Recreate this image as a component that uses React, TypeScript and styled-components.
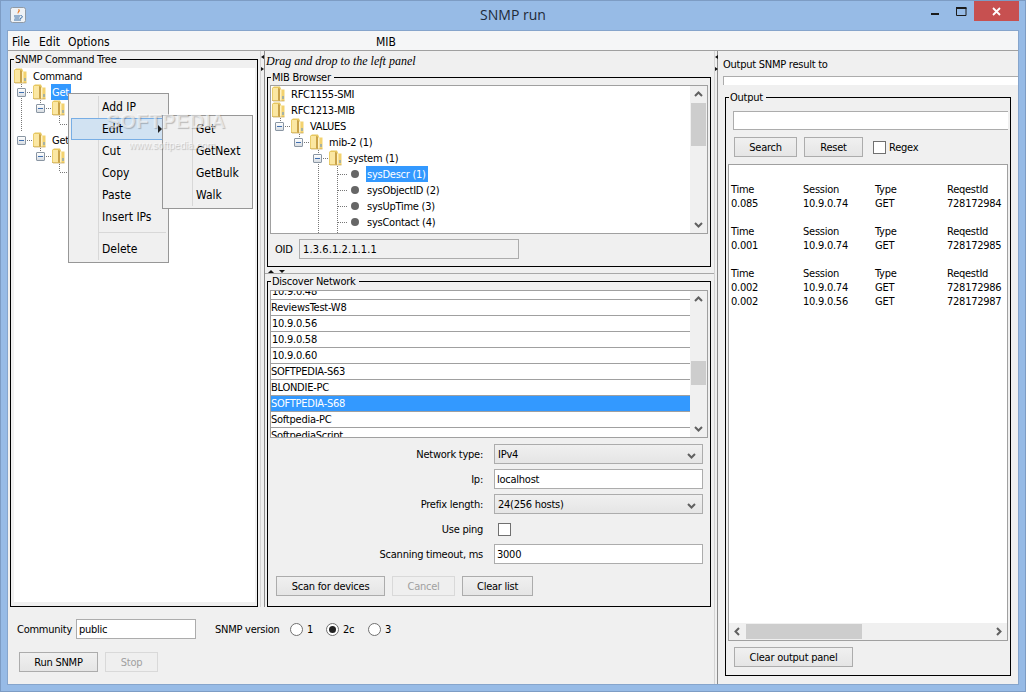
import { createGlobalStyle, styled } from 'styled-components'

const UI_FONT = `'DejaVu Sans Condensed', 'DejaVu Sans', 'Liberation Sans', sans-serif`

const GlobalStyle = createGlobalStyle`
  html, body {
    margin: 0;
    padding: 0;
    background: #97bbe6;
  }
  * {
    box-sizing: border-box;
  }
`

const Frame = styled.div`
  position: relative;
  width: 1026px;
  height: 692px;
  overflow: hidden;
  background: #97bbe6;
  border: 1px solid #7d9cc4;
  display: flex;
  flex-direction: column;
  font: 11px/14px ${UI_FONT};
  font-stretch: condensed;
  letter-spacing: -0.25px;
  color: #000;
`

const TitleBar = styled.div`
  position: relative;
  height: 30px;
  flex: none;
  display: flex;
  align-items: flex-start;
  padding-left: 9px;
`

const AppIcon = styled.svg`
  margin-top: 6px;
  width: 16px;
  height: 16px;
`

const TitleText = styled.div`
  flex: 1;
  text-align: center;
  font: 14px/28px 'Open Sans', sans-serif;
  font-stretch: normal;
  letter-spacing: 0;
  color: #1e2a38;
  padding-left: 78px;
`

const WindowButtons = styled.div`
  display: flex;
  align-items: flex-start;
  margin-right: 6px;
`

const WinButton = styled.div`
  width: 26px;
  height: 20px;
  display: flex;
  align-items: center;
  justify-content: center;
`

const CloseButton = styled.div`
  width: 45px;
  height: 20px;
  background: #c75050;
  display: flex;
  align-items: center;
  justify-content: center;
`

const Client = styled.div`
  margin: 0 7px 7px 7px;
  height: 653px;
  background: #f0f0f0;
  display: flex;
  flex-direction: column;
  outline: 1px solid #86a5cc;
`

const MenuBar = styled.div`
  height: 20px;
  flex: none;
  background: #f5f6f7;
  border-bottom: 1px solid #a0a0a0;
  display: flex;
  align-items: center;
  padding: 2px 0 0 4px;
  font-size: 12px;
  letter-spacing: 0;
`

const MenuItem = styled.span<{ $w: number }>`
  width: ${p => p.$w}px;
`

const Workspace = styled.div`
  flex: 1;
  display: flex;
  min-height: 0;
`

const LeftBlock = styled.div`
  width: 706px;
  flex: none;
  display: flex;
  flex-direction: column;
`

const Panels = styled.div`
  height: 556px;
  flex: none;
  display: flex;
`

const LeftPanel = styled.div`
  width: 252px;
  flex: none;
  padding: 1px 0 0 2px;
`

const VSplit = styled.div`
  width: 5px;
  flex: none;
  border-right: 1px solid #8c8c8c;
  border-left: 1px solid #d4d4d4;
  padding-top: 4px;
`

const SplitArrows = styled.svg`
  display: block;
  width: 4px;
  height: 16px;
`

const MiddlePanel = styled.div`
  width: 449px;
  flex: none;
  padding-left: 2px;
`

const Note = styled.div`
  height: 19px;
  font: italic 12px/20px 'Liberation Serif', serif;
  font-stretch: normal;
  letter-spacing: 0;
  margin-left: -1px;
`

const Group = styled.fieldset<{ $w: number; $h: number; $pt: number }>`
  width: ${p => p.$w}px;
  height: ${p => p.$h}px;
  margin: 0;
  border: 1px solid #000;
  padding: ${p => p.$pt}px 2px 2px 2px;
  min-width: 0;
`

const GroupTitle = styled.legend`
  padding: 0 3px 0 1px;
  margin-left: 1px;
  height: 14px;
  line-height: 15px;
`

const HSplit = styled.div`
  height: 7px;
  margin-left: -2px;
  border-bottom: 1px solid #a8a8a8;
  padding: 3px 0 0 3px;
`

const HArrows = styled.svg`
  display: block;
  width: 18px;
  height: 3px;
`

const ListFrame = styled.div<{ $h: number }>`
  height: ${p => p.$h}px;
  border: 1px solid #a0a0a0;
  background: #fff;
  display: flex;
  overflow: hidden;
`

const Tree = styled.div<{ $pl?: number }>`
  position: relative;
  flex: 1;
  min-width: 0;
  background: #fff;
  padding-left: ${p => p.$pl ?? 0}px;
  overflow: hidden;
`

const CommandTree = styled(Tree)`
  height: 534px;
  margin-left: 1px;
`

const Guides = styled.svg`
  position: absolute;
  left: 0;
  top: 0;
  width: 100%;
  height: 100%;
  shape-rendering: crispEdges;
`

const TreeRow = styled.div<{ $indent: number }>`
  position: relative;
  height: 16px;
  display: flex;
  align-items: center;
  padding-left: ${p => p.$indent}px;
  white-space: nowrap;
`

const Expander = styled.span`
  width: 9px;
  height: 9px;
  margin-right: 7px;
  flex: none;
  border: 1px solid #8a96a3;
  border-radius: 1px;
  background: linear-gradient(#fff, #d8dde2);
  display: flex;
  align-items: center;
  justify-content: center;

  &::after {
    content: '';
    width: 5px;
    height: 1px;
    background: #3f6fb0;
  }
`

const Leaf = styled.span`
  width: 13px;
  height: 16px;
  flex: none;
  display: flex;
  align-items: center;
  justify-content: center;

  &::after {
    content: '';
    width: 8px;
    height: 8px;
    border-radius: 50%;
    background: #666;
  }
`

const FolderIcon = styled.svg`
  width: 13px;
  height: 16px;
  flex: none;
`

const NodeLabel = styled.span<{ $selected?: boolean }>`
  margin-left: 5px;
  padding: 0 2px 0 1px;
  line-height: 18px;
  height: 16px;
  background: ${p => (p.$selected ? '#3399ff' : 'transparent')};
  color: ${p => (p.$selected ? '#fff' : '#000')};
`

const ScrollV = styled.div`
  width: 17px;
  flex: none;
  background: #f0f0f0;
  display: flex;
  flex-direction: column;
  align-items: center;
`

const ArrowBox = styled.div`
  width: 17px;
  height: 17px;
  flex: none;
  display: flex;
  align-items: center;
  justify-content: center;
`

const TrackV = styled.div`
  flex: 1;
  width: 100%;
  padding: 0 1px;
`

const ThumbV = styled.div<{ $top: number; $h: number }>`
  margin-top: ${p => p.$top}px;
  height: ${p => p.$h}px;
  background: #cdcdcd;
`

const Caption = styled.span`
  padding-top: 2px;
`

const OidRow = styled.div`
  display: flex;
  align-items: center;
  margin-top: 5px;
  padding-left: 5px;
`

const OidLabel = styled(Caption)`
  width: 24px;
  flex: none;
`

const OidValue = styled.div`
  width: 220px;
  height: 20px;
  padding-left: 3px;
  border: 1px solid #acacac;
  background: #f0f0f0;
  line-height: 20px;
  letter-spacing: 0.1px;
`

const Hosts = styled.div`
  flex: 1;
  min-width: 0;
  overflow: hidden;
`

const HostRows = styled.div`
  margin-top: -7px;
`

const HostRow = styled.div<{ $selected?: boolean; $ip?: boolean }>`
  height: 16px;
  line-height: 15px;
  padding-left: ${p => (p.$ip ? 1 : 0)}px;
  border-bottom: 1px solid #a0a0a0;
  background: ${p => (p.$selected ? '#3399ff' : '#fff')};
  color: ${p => (p.$selected ? '#fff' : '#000')};
`

const FormGrid = styled.div`
  display: grid;
  grid-template-columns: 212px 209px;
  column-gap: 11px;
  row-gap: 5px;
  grid-auto-rows: 20px;
  align-items: center;
  margin: 6px 0 0 1px;
`

const FormLabel = styled.label`
  text-align: right;
  padding-top: 2px;
`

const Combo = styled.div`
  height: 20px;
  border: 1px solid #acacac;
  background: linear-gradient(#f0f0f0, #e5e5e5);
  display: flex;
  align-items: center;
  justify-content: space-between;
  padding: 2px 6px 0 3px;
`

const TextInput = styled.input<{ $w?: number }>`
  width: ${p => (p.$w ? `${p.$w}px` : '100%')};
  height: 20px;
  border: 1px solid #acacac;
  background: #fff;
  padding: 0 2px;
  margin: 0;
  font: 11px ${UI_FONT};
  font-stretch: condensed;
  letter-spacing: -0.25px;
  color: #000;
  outline: none;
`

const CheckBox = styled.span<{ $ml?: number }>`
  display: block;
  width: 13px;
  height: 13px;
  margin-left: ${p => p.$ml ?? 0}px;
  flex: none;
  border: 1px solid #707070;
  background: #fff;
`

const ButtonRow = styled.div`
  display: flex;
  gap: 7px;
  margin: 12px 0 0 6px;
`

const Btn = styled.button<{ $w: number }>`
  width: ${p => p.$w}px;
  height: 20px;
  flex: none;
  padding: 0;
  border: 1px solid #acacac;
  background: linear-gradient(#f0f0f0, #e5e5e5);
  font: 11px ${UI_FONT};
  font-stretch: condensed;
  letter-spacing: -0.25px;
  color: #000;

  &:disabled {
    border-color: #d9d9d9;
    background: #efefef;
    color: #a0a0a0;
  }
`

const BottomBar = styled.div`
  flex: 1;
  padding: 12px 0 0 9px;
`

const CommunityRow = styled.div`
  display: flex;
  align-items: center;
  height: 20px;
`

const CommunityLabel = styled(Caption)`
  width: 59px;
  flex: none;
`

const VersionLabel = styled(Caption)`
  width: 75px;
  flex: none;
  margin-left: 19px;
`

const RadioItem = styled.span<{ $w: number }>`
  display: flex;
  align-items: center;
  gap: 4px;
  width: ${p => p.$w}px;
`

const Radio = styled.span<{ $on?: boolean }>`
  width: 13px;
  height: 13px;
  border-radius: 50%;
  border: 1px solid #707070;
  background: #fff;
  display: flex;
  align-items: center;
  justify-content: center;

  &::after {
    content: '';
    width: 7px;
    height: 7px;
    border-radius: 50%;
    background: ${p => (p.$on ? '#222' : 'transparent')};
  }
`

const RunRow = styled.div`
  display: flex;
  gap: 7px;
  margin: 13px 0 0 2px;
`

const RightSplit = styled(VSplit)`
  margin-right: 1px;
  width: 4px;
`

const RightPanel = styled.div`
  flex: 1;
  min-width: 0;
  overflow: hidden;
  padding-left: 4px;
`

const RightCaption = styled.div`
  height: 25px;
  line-height: 27px;
`

const TargetBar = styled.div`
  height: 9px;
  margin-right: -4px;
  background: #fff;
  border-top: 1px solid #acacac;
  border-left: 1px solid #acacac;
`

const OutputGroup = styled(Group)`
  margin: 5px 0 0 2px;
`

const SearchInput = styled(TextInput)`
  display: block;
  width: 275px;
  height: 19px;
  margin-left: 5px;
  border-right: none;
`

const SearchRow = styled.div`
  display: flex;
  align-items: center;
  gap: 7px;
  margin: 7px 0 0 6px;
`

const RegexLabel = styled.span`
  display: flex;
  align-items: center;
  gap: 3px;
  margin-left: 3px;
`

const OutputPane = styled.div`
  height: 477px;
  margin-top: 7px;
  border: 1px solid #a0a0a0;
  background: #fff;
  display: flex;
  flex-direction: column;
`

const OutputText = styled.div`
  flex: 1;
  padding: 17px 0 0 2px;
`

const ResultBlock = styled.div`
  margin-bottom: 14px;
`

const ResultLine = styled.div`
  display: grid;
  grid-template-columns: repeat(4, 72px);
  height: 14px;
  line-height: 16px;
  white-space: nowrap;
`

const ScrollH = styled.div`
  height: 17px;
  flex: none;
  background: #f0f0f0;
  display: flex;
  align-items: center;
  justify-content: space-between;
`

const ThumbH = styled.div`
  width: 116px;
  height: 15px;
  background: #cdcdcd;
  margin-right: auto;
`

const ClearRow = styled.div`
  margin: 6px 0 0 6px;
`

const PopupMenu = styled.div<{ $x: number; $y: number; $w: number; $sep: number }>`
  position: absolute;
  left: ${p => p.$x}px;
  top: ${p => p.$y}px;
  width: ${p => p.$w}px;
  padding: 2px;
  border: 1px solid #979797;
  background: #f0f0f0;
  font-size: 12px;
  letter-spacing: 0;

  &::before {
    content: '';
    position: absolute;
    left: ${p => p.$sep}px;
    top: 2px;
    bottom: 2px;
    width: 1px;
    background: #d8d8d8;
  }
`

const PopupItem = styled.div<{ $active?: boolean; $pl: number }>`
  position: relative;
  height: 22px;
  line-height: 23px;
  padding-left: ${p => p.$pl}px;
  background: ${p => (p.$active ? '#d1e2f2' : 'transparent')};
  outline: ${p => (p.$active ? '1px solid #78aee5' : 'none')};
  outline-offset: -1px;
`

const PopupArrow = styled.span`
  position: absolute;
  right: 4px;
  top: 7px;
  border-left: 4px solid #222;
  border-top: 4px solid transparent;
  border-bottom: 4px solid transparent;
`

const PopupDivider = styled.div`
  height: 1px;
  margin: 4px 0 5px 28px;
  background: #d8d8d8;
`

const Watermark = styled.div`
  position: absolute;
  left: 105px;
  top: 108px;
  width: 140px;
  pointer-events: none;
  color: rgba(255, 255, 255, 0.6);
  text-shadow: 1px 1px 1px rgba(0, 0, 0, 0.22);
`

const WatermarkBig = styled.div`
  font: bold 20px/24px 'Liberation Sans', sans-serif;
  font-stretch: normal;
  letter-spacing: 0.6px;
`

const WatermarkSmall = styled.div`
  font: 10px/12px 'Liberation Sans', sans-serif;
  font-stretch: normal;
  letter-spacing: 0;
  margin: 7px 0 0 23px;
`

const Folder = () => (
  <FolderIcon viewBox="0 0 13 16">
    <path d="M0 2 L2 0.5 H8 L9 3 V15 H1 L0 14 Z" fill="#e7c75f" />
    <path d="M0.8 2 H6 V14.4 H0.8 Z" fill="#fbe7a2" />
    <path d="M6 2 L8 3 V15 L6 14 Z" fill="#c9a24a" />
    <path d="M8 3.5 H12.5 V15 H8 Z" fill="#f3d26f" />
    <path d="M8 3.5 H9.5 V15 H8 Z" fill="#fff2c4" />
    <path d="M10.5 10 H11.5 V13 H10.5 Z" fill="#5b8fd6" />
    <path d="M0 14 L1 15 H12.5" fill="none" stroke="#b8953f" strokeWidth="0.6" />
  </FolderIcon>
)

type Node = { level: number; label: string; kind: 'folder' | 'open' | 'leaf'; selected?: boolean }

const TreeNode = ({ node }: { node: Node }) => {
  const indent = node.kind === 'open' ? node.level * 19 - 16 : node.level * 19
  return (
    <TreeRow $indent={indent}>
      {node.kind === 'open' && <Expander />}
      {node.kind === 'leaf' ? <Leaf /> : <Folder />}
      <NodeLabel $selected={node.selected}>{node.label}</NodeLabel>
    </TreeRow>
  )
}

const Chevron = ({ dir }: { dir: 'up' | 'down' | 'left' | 'right' }) => {
  const d = {
    up: 'M1 6 L4.5 2.5 L8 6',
    down: 'M1 3 L4.5 6.5 L8 3',
    left: 'M6 1 L2.5 4.5 L6 8',
    right: 'M3 1 L6.5 4.5 L3 8',
  }[dir]
  return (
    <svg width="9" height="9" viewBox="0 0 9 9">
      <path d={d} fill="none" stroke="#606060" strokeWidth="2" />
    </svg>
  )
}

const VScrollBar = ({ top, height }: { top: number; height: number }) => (
  <ScrollV>
    <ArrowBox><Chevron dir="up" /></ArrowBox>
    <TrackV><ThumbV $top={top} $h={height} /></TrackV>
    <ArrowBox><Chevron dir="down" /></ArrowBox>
  </ScrollV>
)

const Arrows = () => (
  <SplitArrows viewBox="0 0 4 16">
    <path d="M0 2 L3 0 V4 Z" fill="#111" />
    <path d="M3 14 L0 12 V16 Z" fill="#111" />
  </SplitArrows>
)

const commandNodes: (Node | null)[] = [
  { level: 0, label: 'Command', kind: 'folder' },
  { level: 1, label: 'Get', kind: 'open', selected: true },
  { level: 2, label: '', kind: 'open' },
  null,
  { level: 1, label: 'Get', kind: 'open' },
  { level: 2, label: '', kind: 'open' },
]

const mibTree: Node[] = [
  { level: 0, label: 'RFC1155-SMI', kind: 'folder' },
  { level: 0, label: 'RFC1213-MIB', kind: 'folder' },
  { level: 1, label: 'VALUES', kind: 'open' },
  { level: 2, label: 'mib-2 (1)', kind: 'open' },
  { level: 3, label: 'system (1)', kind: 'open' },
  { level: 4, label: 'sysDescr (1)', kind: 'leaf', selected: true },
  { level: 4, label: 'sysObjectID (2)', kind: 'leaf' },
  { level: 4, label: 'sysUpTime (3)', kind: 'leaf' },
  { level: 4, label: 'sysContact (4)', kind: 'leaf' },
]

const hosts = [
  { name: '10.9.0.48', ip: true },
  { name: 'ReviewsTest-W8' },
  { name: '10.9.0.56', ip: true },
  { name: '10.9.0.58', ip: true },
  { name: '10.9.0.60', ip: true },
  { name: 'SOFTPEDIA-S63' },
  { name: 'BLONDIE-PC' },
  { name: 'SOFTPEDIA-S68', selected: true },
  { name: 'Softpedia-PC' },
  { name: 'SoftpediaScript' },
]

const results = [
  [['0.085', '10.9.0.74', 'GET', '728172984']],
  [['0.001', '10.9.0.74', 'GET', '728172985']],
  [
    ['0.002', '10.9.0.74', 'GET', '728172986'],
    ['0.002', '10.9.0.56', 'GET', '728172987'],
  ],
]

const editItems = ['Add IP', 'Edit', 'Cut', 'Copy', 'Paste', 'Insert IPs']
const subItems = ['Get', 'GetNext', 'GetBulk', 'Walk']

const App = () => (
  <>
    <GlobalStyle />
    <Frame>
      <TitleBar>
        <AppIcon viewBox="0 0 16 16">
          <rect x="0.5" y="0.5" width="15" height="15" rx="2" fill="#eef2f6" stroke="#8f9aa6" />
          <path d="M8 2 C10 4 6 5 8.5 7.5 C7 5.5 11 5 9.5 2.5 Z" fill="#e8761e" />
          <path d="M4 9 H10 M4.5 11 H9.5 M4 13 H11" stroke="#3a6ea5" strokeWidth="1" fill="none" />
          <path d="M10.5 8.5 C13 8.5 13 11 10 11.5" stroke="#3a6ea5" strokeWidth="1" fill="none" />
        </AppIcon>
        <TitleText>SNMP run</TitleText>
        <WindowButtons>
          <WinButton>
            <svg width="9" height="9" viewBox="0 0 9 9"><rect x="0" y="6" width="8" height="2" fill="#1b1b1b" /></svg>
          </WinButton>
          <WinButton>
            <svg width="11" height="9" viewBox="0 0 11 9"><path d="M0.5 1 H10 V8.5 H0.5 Z" fill="none" stroke="#1b1b1b" /><rect x="0" y="0" width="10.5" height="2" fill="#1b1b1b" /></svg>
          </WinButton>
          <CloseButton>
            <svg width="9" height="9" viewBox="0 0 9 9"><path d="M1 1 L8 8 M8 1 L1 8" stroke="#fff" strokeWidth="1.8" /></svg>
          </CloseButton>
        </WindowButtons>
      </TitleBar>
      <Client>
        <MenuBar>
          <MenuItem $w={27}>File</MenuItem>
          <MenuItem $w={29}>Edit</MenuItem>
          <MenuItem $w={308}>Options</MenuItem>
          <MenuItem $w={30}>MIB</MenuItem>
        </MenuBar>
        <Workspace>
          <LeftBlock>
            <Panels>
              <LeftPanel>
                <Group $w={248} $h={555} $pt={2}>
                  <GroupTitle>SNMP Command Tree</GroupTitle>
                  <CommandTree>
                    <Guides>
                      <path
                        d="M7.5 16 V64 M11 24.5 H19 M26.5 32 V36 M30 40.5 H38 M45.5 48 V56 M45.5 56.5 H54 M30 88.5 H38 M26.5 80 V84 M11 72.5 H19 M45.5 96 V104 M45.5 104.5 H54"
                        stroke="#777"
                        strokeDasharray="1 1"
                        fill="none"
                      />
                    </Guides>
                    {commandNodes.map((node, index) =>
                      node ? <TreeNode key={index} node={node} /> : <TreeRow key={index} $indent={0} />,
                    )}
                  </CommandTree>
                </Group>
              </LeftPanel>
              <VSplit><Arrows /></VSplit>
              <MiddlePanel>
                <Note>Drag and drop to the left panel</Note>
                <Group $w={444} $h={197} $pt={1}>
                  <GroupTitle>MIB Browser</GroupTitle>
                  <ListFrame $h={149}>
                    <Tree $pl={1}>
                      <Guides>
                        <path
                          d="M9.5 32 V36 M14 40.5 H20 M28.5 48 V52 M33 56.5 H39 M47.5 64 V148 M52 72.5 H58 M66.5 80 V148 M67 88.5 H77 M67 104.5 H77 M67 120.5 H77 M67 136.5 H77"
                          stroke="#777"
                          strokeDasharray="1 1"
                          fill="none"
                        />
                      </Guides>
                      {mibTree.map((node, index) => <TreeNode key={index} node={node} />)}
                    </Tree>
                    <VScrollBar top={0} height={43} />
                  </ListFrame>
                  <OidRow>
                    <OidLabel>OID</OidLabel>
                    <OidValue>1.3.6.1.2.1.1.1</OidValue>
                  </OidRow>
                </Group>
                <HSplit>
                  <HArrows viewBox="0 0 18 3">
                    <path d="M0 3 L3 0 L6 3 Z" fill="#111" />
                    <path d="M11 0 L17 0 L14 3 Z" fill="#111" />
                  </HArrows>
                </HSplit>
                <Group $w={444} $h={333} $pt={2}>
                  <GroupTitle>Discover Network</GroupTitle>
                  <ListFrame $h={148}>
                    <Hosts>
                      <HostRows>
                        {hosts.map(host => (
                          <HostRow key={host.name} $ip={host.ip} $selected={host.selected}>{host.name}</HostRow>
                        ))}
                      </HostRows>
                    </Hosts>
                    <VScrollBar top={53} height={24} />
                  </ListFrame>
                  <FormGrid>
                    <FormLabel>Network type:</FormLabel>
                    <Combo>IPv4<Chevron dir="down" /></Combo>
                    <FormLabel>Ip:</FormLabel>
                    <TextInput defaultValue="localhost" />
                    <FormLabel>Prefix length:</FormLabel>
                    <Combo>24(256 hosts)<Chevron dir="down" /></Combo>
                    <FormLabel>Use ping</FormLabel>
                    <CheckBox $ml={4} />
                    <FormLabel>Scanning timeout, ms</FormLabel>
                    <TextInput defaultValue="3000" />
                  </FormGrid>
                  <ButtonRow>
                    <Btn $w={109}>Scan for devices</Btn>
                    <Btn $w={63} disabled>Cancel</Btn>
                    <Btn $w={71}>Clear list</Btn>
                  </ButtonRow>
                </Group>
              </MiddlePanel>
            </Panels>
            <BottomBar>
              <CommunityRow>
                <CommunityLabel>Community</CommunityLabel>
                <TextInput $w={120} defaultValue="public" />
                <VersionLabel>SNMP version</VersionLabel>
                <RadioItem $w={36}><Radio /><Caption>1</Caption></RadioItem>
                <RadioItem $w={42}><Radio $on /><Caption>2c</Caption></RadioItem>
                <RadioItem $w={36}><Radio /><Caption>3</Caption></RadioItem>
              </CommunityRow>
              <RunRow>
                <Btn $w={79}>Run SNMP</Btn>
                <Btn $w={53} disabled>Stop</Btn>
              </RunRow>
            </BottomBar>
          </LeftBlock>
          <RightSplit><Arrows /></RightSplit>
          <RightPanel>
            <RightCaption>Output SNMP result to</RightCaption>
            <TargetBar />
            <OutputGroup $w={286} $h={586} $pt={7}>
              <GroupTitle>Output</GroupTitle>
              <SearchInput />
              <SearchRow>
                <Btn $w={63}>Search</Btn>
                <Btn $w={59}>Reset</Btn>
                <RegexLabel><CheckBox /><Caption>Regex</Caption></RegexLabel>
              </SearchRow>
              <OutputPane>
                <OutputText>
                  {results.map((block, blockIndex) => (
                    <ResultBlock key={blockIndex}>
                      <ResultLine>
                        <span>Time</span><span>Session</span><span>Type</span><span>ReqestId</span>
                      </ResultLine>
                      {block.map(line => (
                        <ResultLine key={line[3]}>
                          {line.map(cell => <span key={cell}>{cell}</span>)}
                        </ResultLine>
                      ))}
                    </ResultBlock>
                  ))}
                </OutputText>
                <ScrollH>
                  <ArrowBox><Chevron dir="left" /></ArrowBox>
                  <ThumbH />
                  <ArrowBox><Chevron dir="right" /></ArrowBox>
                </ScrollH>
              </OutputPane>
              <ClearRow><Btn $w={119}>Clear output panel</Btn></ClearRow>
            </OutputGroup>
          </RightPanel>
        </Workspace>
      </Client>
      <PopupMenu $x={67} $y={92} $w={101} $sep={29}>
        {editItems.map(item => (
          <PopupItem key={item} $pl={31} $active={item === 'Edit'}>
            {item}
            {item === 'Edit' && <PopupArrow />}
          </PopupItem>
        ))}
        <PopupDivider />
        <PopupItem $pl={31}>Delete</PopupItem>
      </PopupMenu>
      <PopupMenu $x={161} $y={114} $w={91} $sep={29}>
        {subItems.map(item => <PopupItem key={item} $pl={31}>{item}</PopupItem>)}
      </PopupMenu>
      <Watermark>
        <WatermarkBig>SOFTPEDIA</WatermarkBig>
        <WatermarkSmall>www.softpedia.com</WatermarkSmall>
      </Watermark>
    </Frame>
  </>
)

export default App
